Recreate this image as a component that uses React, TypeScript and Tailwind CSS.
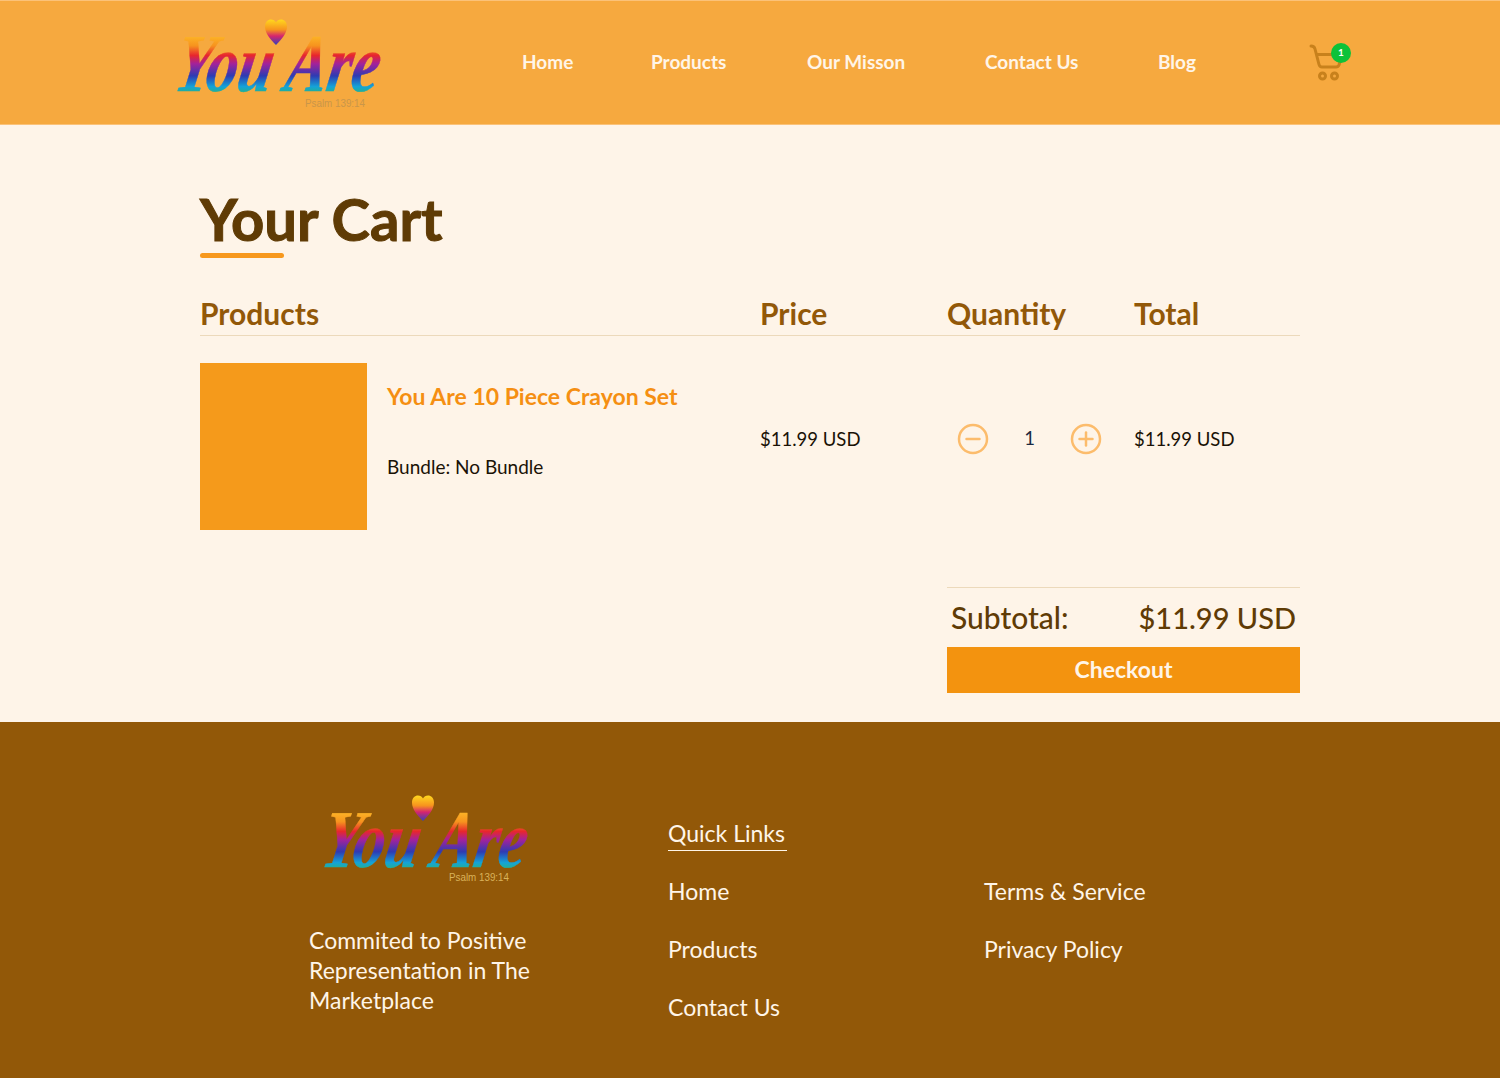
const font = "font-['Lato','Noto_Sans',sans-serif]";

function Logo({ id, footer }: { id: string; footer?: boolean }) {
  return (
    <svg width="220" height="100" viewBox="0 0 220 100" className="block overflow-visible">
      <defs>
        <linearGradient id={`${id}-text`} gradientUnits="userSpaceOnUse" x1="0" y1="22" x2="0" y2="82">
          <stop offset="0" stopColor="#fdb827" />
          <stop offset="0.18" stopColor="#f7931e" />
          <stop offset="0.34" stopColor="#e8262d" />
          <stop offset="0.48" stopColor="#a3229b" />
          <stop offset="0.68" stopColor="#2e3bb3" />
          <stop offset="0.86" stopColor="#14a3d8" />
          <stop offset="1" stopColor="#2bb673" />
        </linearGradient>
        <linearGradient id={`${id}-heart`} x1="0" y1="0" x2="0" y2="1">
          <stop offset="0" stopColor="#ffd81e" />
          <stop offset="0.4" stopColor="#f7931e" />
          <stop offset="0.65" stopColor="#d6246e" />
          <stop offset="1" stopColor="#3342b8" />
        </linearGradient>
      </defs>
      <path
        d="M106 32 C100 26 95 20 95 13.500 C95 9 98 6.500 101 6.500 C103.200 6.500 105 7.500 106 9.500 C107 7.500 108.800 6.500 111 6.500 C114 6.500 117 9 117 13.500 C117 20 112 26 106 32 Z"
        fill={`url(#${id}-heart)`}
      />
      <text
        x="8"
        y="78"
        fill={`url(#${id}-text)`}
        stroke={`url(#${id}-text)`}
        strokeWidth="0.5"
        fontFamily="'Liberation Serif', serif"
        fontStyle="italic"
        fontWeight="700"
        fontSize="82"
        textLength="204"
        lengthAdjust="spacingAndGlyphs"
        transform="translate(8 0) skewX(-10)"
      >
        You Are
      </text>
      <text
        x={footer ? 132 : 135}
        y={footer ? 92 : 94}
        fill={footer ? "#d9b25a" : "#c9964a"}
        fontFamily="'Liberation Sans', sans-serif"
        fontSize="11"
        textLength="60"
        lengthAdjust="spacingAndGlyphs"
      >
        Psalm 139:14
      </text>
    </svg>
  );
}

function CartIcon() {
  return (
    <svg width="36" height="40" viewBox="0 0 36 40" fill="none" stroke="#c8811c" strokeWidth="3" strokeLinecap="round" strokeLinejoin="round">
      <path d="M2 3 C4.500 3 5.500 4 6 6 L10 21.500 C10.400 23.100 11.500 24 13 24 H27 C28.500 24 29.500 23.300 30 22 L33 11.500 H7.500" />
      <circle cx="13.500" cy="33" r="3" />
      <circle cx="25.500" cy="33" r="3" />
    </svg>
  );
}

function QtyIcon({ plus }: { plus?: boolean }) {
  return (
    <svg width="32" height="32" viewBox="0 0 32 32" fill="none" stroke="#fcbc6c" strokeWidth="2.500" strokeLinecap="round">
      <circle cx="16" cy="16" r="14" />
      <path d="M9.500 16 H22.500" />
      {plus && <path d="M16 9.500 V22.500" />}
    </svg>
  );
}

export default function App() {
  const nav = [
    { label: "Home", cls: "w-[129px]" },
    { label: "Products", cls: "w-[156px]" },
    { label: "Our Misson", cls: "w-[178px]" },
    { label: "Contact Us", cls: "w-[173px]" },
    { label: "Blog", cls: "w-[151px]" },
  ];

  return (
    <div className={`${font} min-h-[1078px] w-full bg-[#fef4e8]`}>
      {/* Header */}
      <header className="flex h-[125px] items-center border-y border-[#fbc279] bg-[#f6a93f] pl-[170px]">
        <div className="w-[352px] shrink-0">
          <Logo id="head" />
        </div>
        <nav className="flex">
          {nav.map((item) => (
            <a key={item.label} className={`${item.cls} text-[19px] font-bold text-[#fff5e8]`}>
              {item.label}
            </a>
          ))}
        </nav>
        <div className="relative">
          <CartIcon />
          <span className="absolute top-0 left-[22px] flex h-5 w-5 items-center justify-center rounded-full bg-[#0dc239] text-[10px] font-bold text-white">
            1
          </span>
        </div>
      </header>

      {/* Cart */}
      <main className="mx-auto h-[597px] w-[1100px] pt-[60px]">
        <h1 className="text-[58px] leading-[67px] font-bold text-[#5f3b05] [-webkit-text-stroke:1px_#5f3b05]">Your Cart</h1>
        <div className="mt-[1px] h-[5px] w-[84px] rounded-full bg-[#f7981d]" />

        <div className="mt-[36px] grid h-[42px] grid-cols-[560px_187px_187px_1fr] items-end border-b border-[#ecd9bb] pb-[7px] text-[30px] leading-[30px] font-bold text-[#925808]">
          <div>Products</div>
          <div>Price</div>
          <div>Quantity</div>
          <div>Total</div>
        </div>

        <div className="mt-[27px] grid h-[167px] grid-cols-[560px_187px_187px_1fr] text-[18.5px] text-[#1a1206]">
          <div className="flex gap-5">
            <div className="h-[167px] w-[167px] bg-[#f59a1b]" />
            <div>
              <div className="mt-[19px] text-[23px] leading-[28px] font-bold text-[#f58f12]">You Are 10 Piece Crayon Set</div>
              <div className="mt-[43px] text-[19px] leading-[28px]">Bundle: No Bundle</div>
            </div>
          </div>
          <div className="pt-[62px] leading-[28px]">$11.99 USD</div>
          <div className="flex items-center pb-[15px] pl-[10px]">
            <QtyIcon />
            <span className="w-[81px] text-center text-[#1b2a41]">1</span>
            <QtyIcon plus />
          </div>
          <div className="pt-[62px] leading-[28px]">$11.99 USD</div>
        </div>

        <div className="mt-[57px] ml-auto w-[353px] border-t border-[#ecd9bb]">
          <div className="flex h-[59px] items-center justify-between px-1 text-[30px] font-medium text-[#5f3b05]">
            <span>Subtotal:</span>
            <span className="text-[29px]">$11.99 USD</span>
          </div>
          <button className="block h-[46px] w-full bg-[#f3930f] pb-[2px] text-center text-[23px] font-bold text-[#fff5e8]">Checkout</button>
        </div>
      </main>

      {/* Footer */}
      <footer className="flex h-[356px] bg-[#925808] pl-[309px] text-[23px] text-[#fff5e8]">
        <div className="w-[359px] shrink-0 pt-[67px]">
          <div className="ml-[8px]">
            <Logo id="foot" footer />
          </div>
          <p className="mt-[36px] w-[260px] leading-[30px]">Commited to Positive Representation in The Marketplace</p>
        </div>
        <div className="w-[316px] shrink-0 pt-[96px]">
          <div className="w-[119px] border-b border-[#fff5e8] pb-[2px] leading-[30px]">Quick Links</div>
          <div className="mt-[25px] flex flex-col gap-[28px] leading-[30px]">
            <a>Home</a>
            <a>Products</a>
            <a>Contact Us</a>
          </div>
        </div>
        <div className="pt-[154px]">
          <div className="flex flex-col gap-[28px] leading-[30px]">
            <a>Terms &amp; Service</a>
            <a>Privacy Policy</a>
          </div>
        </div>
      </footer>
    </div>
  );
}
